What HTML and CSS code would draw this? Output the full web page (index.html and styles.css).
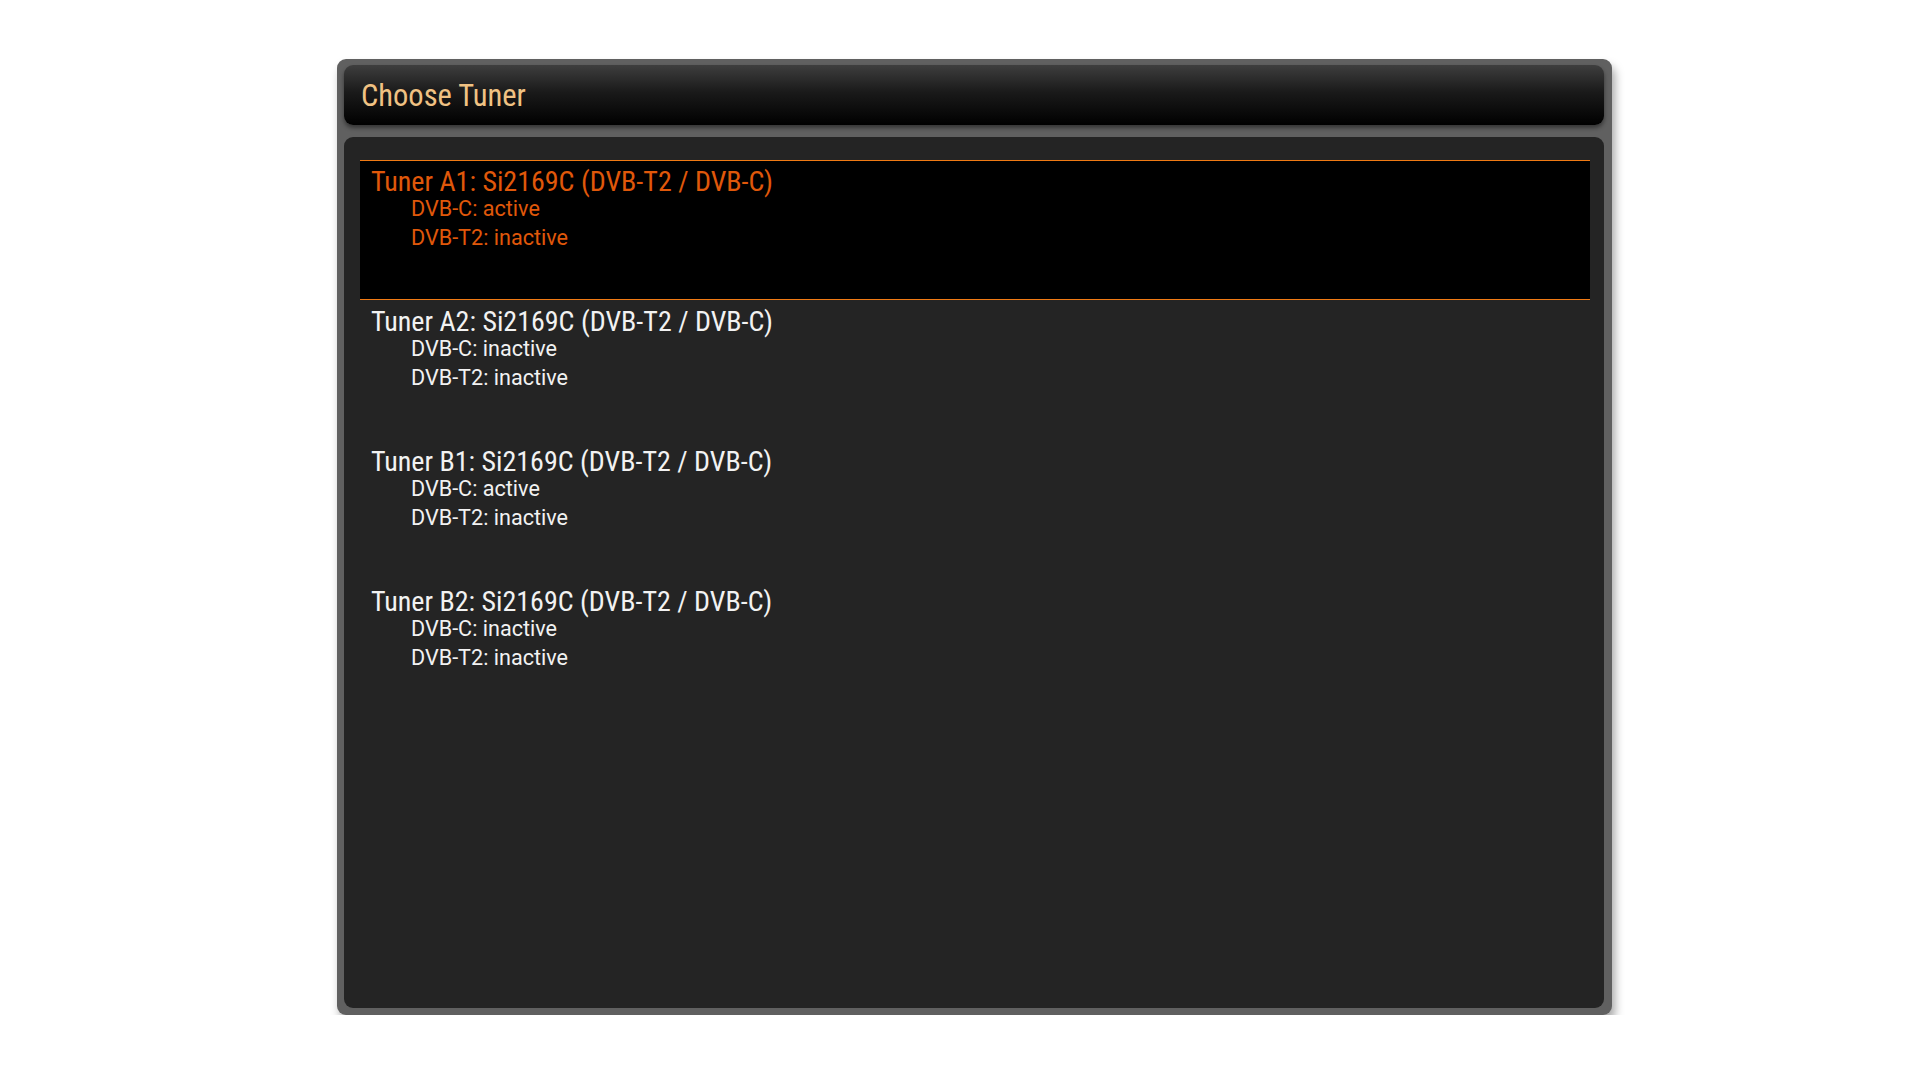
FILE: index.html
```html
<!DOCTYPE html>
<html lang="en">

<head>
    <meta charset="UTF-8">
    <meta name="viewport" content="width=device-width, initial-scale=1.0">
    <title>Choose Tuner</title>
    <link rel="stylesheet" href="styles.css">
</head>

<body>

    <!-- Dialog frame -->
    <div id="dialog">
        <!-- Title bar -->
        <div id="dialog-header">
            <h1>Choose Tuner</h1>
        </div>

        <!-- Tuner list -->
        <div id="dialog-body">
            <ul id="tuner-list">
                <li class="tuner selected">
                    <p class="name">Tuner A1: Si2169C (DVB-T2 / DVB-C)</p>
                    <p class="state">DVB-C: active</p>
                    <p class="state">DVB-T2: inactive</p>
                </li>
                <li class="tuner">
                    <p class="name">Tuner A2: Si2169C (DVB-T2 / DVB-C)</p>
                    <p class="state">DVB-C: inactive</p>
                    <p class="state">DVB-T2: inactive</p>
                </li>
                <li class="tuner">
                    <p class="name">Tuner B1: Si2169C (DVB-T2 / DVB-C)</p>
                    <p class="state">DVB-C: active</p>
                    <p class="state">DVB-T2: inactive</p>
                </li>
                <li class="tuner">
                    <p class="name">Tuner B2: Si2169C (DVB-T2 / DVB-C)</p>
                    <p class="state">DVB-C: inactive</p>
                    <p class="state">DVB-T2: inactive</p>
                </li>
            </ul>
        </div>
    </div>

</body>

</html>
```

FILE: styles.css
```css
body {
    font-family: Roboto, "Liberation Sans", sans-serif;
    font-stretch: condensed;
    background-color: #ffffff;
    margin: 0;
    padding: 0;
}

/* Outer gray frame */
#dialog {
    width: 1275px;
    height: 956px;
    margin: 59px 0 0 337px;
    box-sizing: border-box;
    padding: 6px 8px 7px 7px;
    background-color: #606060;
    border-radius: 9px;
    box-shadow: 3px 7px 10px rgba(0, 0, 0, 0.35);
    display: flex;
    flex-direction: column;
}

/* Title bar */
#dialog-header {
    height: 60px;
    flex-shrink: 0;
    margin-bottom: 12px;
    border-radius: 9px;
    background: linear-gradient(to bottom, #3e3e3e 0%, #1a1a1a 45%, #000000 100%);
    box-shadow: 0px 3px 4px rgba(0, 0, 0, 0.45);
    display: flex;
    align-items: center;
    padding: 0 17px;
}

#dialog-header h1 {
    margin: 0;
    font-size: 30.5px;
    font-weight: 400;
    color: #f0c283;
}

/* List panel */
#dialog-body {
    flex-grow: 1;
    background-color: #242424;
    border-radius: 9px;
    padding: 23px 14px 0 16px;
}

#tuner-list {
    list-style: none;
    margin: 0;
    padding: 0;
}

.tuner {
    height: 140px;
    box-sizing: border-box;
    border-top: 1px solid transparent;
    border-bottom: 1px solid transparent;
    padding: 8px 0 0 11px;
    color: #f2f2f2;
}

.tuner.selected {
    background-color: #000000;
    border-color: #f07a14;
    color: #e0580a;
}

.tuner p {
    margin: 0;
}

.tuner .name {
    font-size: 28px;
    line-height: 26px;
}

.tuner .state {
    font-size: 21.6px;
    font-stretch: normal;
    line-height: 28.5px;
    padding-left: 40px;
}
```
